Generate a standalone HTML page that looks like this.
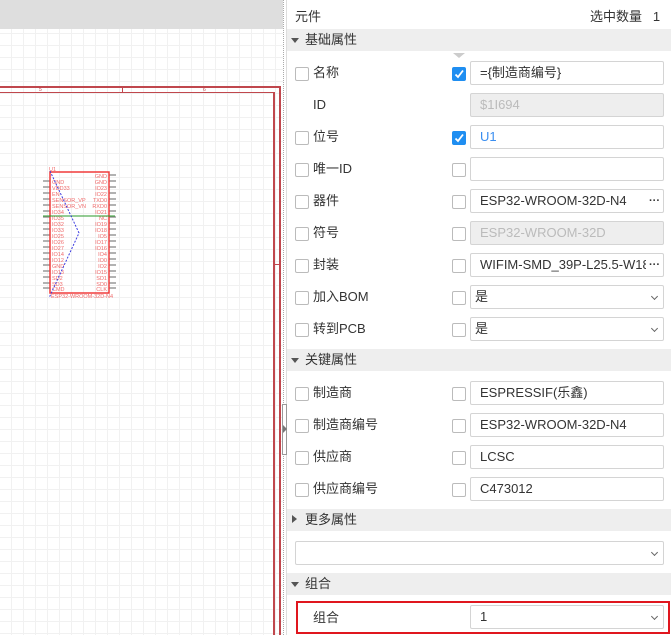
<!DOCTYPE html>
<html><head><meta charset="utf-8"><style>
*{margin:0;padding:0;box-sizing:border-box}
body{width:671px;height:635px;overflow:hidden;background:#fff;font-family:"Liberation Sans","Noto Sans CJK SC",sans-serif;font-size:13px;color:#333;position:relative}
.abs{position:absolute}
#canvas{left:0;top:0;width:283px;height:635px;background:#fff;background-image:linear-gradient(#f1f1f1 1px,transparent 1px),linear-gradient(90deg,#f1f1f1 1px,transparent 1px);background-size:12px 12px;background-position:0 9px,11px 0;overflow:hidden}
.sec{left:287px;width:384px;height:22px;background:#eee;font-size:13px;line-height:22px;padding-left:18px}
.tri{position:absolute;left:4px;top:9px;width:0;height:0;border-left:4px solid transparent;border-right:4px solid transparent;border-top:5px solid #555}
.trir{position:absolute;left:5px;top:6px;width:0;height:0;border-top:4px solid transparent;border-bottom:4px solid transparent;border-left:5px solid #555}
.cb{position:absolute;width:14px;height:14px;border:1px solid #bbb;background:#fff;border-radius:2px}
.cb.on{background:#1f8ef1;border-color:#1f8ef1}
.lbl{position:absolute;left:313px;font-size:13px;line-height:16px}
.inp{position:absolute;left:470px;width:194px;height:24px;border:1px solid #d4d4d4;border-radius:2px;background:#fff;font-size:13px;line-height:22px;padding-left:9px;white-space:nowrap;overflow:hidden}
.inp.dis{background:#eee;color:#bbb}
.dots{position:absolute;right:3px;top:0;background:#fff;font-weight:bold;letter-spacing:0;font-size:11px}
.chev{position:absolute;right:6px;top:8px;width:5px;height:5px;border-right:1px solid #666;border-bottom:1px solid #666;transform:rotate(45deg)}
</style></head><body>
<div id="canvas" class="abs">
<div class="abs" style="left:0;top:0;width:283px;height:29px;background:#dedede"></div>
<div class="abs" style="left:0;top:86px;width:280px;height:2px;background:#c0474d"></div>
<div class="abs" style="left:0;top:92px;width:274px;height:1px;background:#c0474d"></div>
<div class="abs" style="left:279px;top:86px;width:2px;height:560px;background:#c0474d"></div>
<div class="abs" style="left:273px;top:92px;width:2px;height:560px;background:#c0474d"></div>
<div class="abs" style="left:122px;top:86px;width:1px;height:7px;background:#c0474d"></div>
<div class="abs" style="left:274px;top:264px;width:7px;height:1px;background:#c0474d"></div>
<div class="abs" style="left:39px;top:87px;font-size:5px;color:#c0474d">5</div>
<div class="abs" style="left:203px;top:87px;font-size:5px;color:#c0474d">6</div>
<svg class="abs" style="left:0;top:0" width="283" height="635">
<g stroke="#999" stroke-width="1.5">
<line x1="43" y1="181" x2="50" y2="181"/><line x1="43" y1="187" x2="50" y2="187"/><line x1="43" y1="193" x2="50" y2="193"/><line x1="43" y1="199" x2="50" y2="199"/><line x1="43" y1="205" x2="50" y2="205"/><line x1="43" y1="211" x2="50" y2="211"/><line x1="43" y1="217" x2="50" y2="217"/><line x1="43" y1="223" x2="50" y2="223"/><line x1="43" y1="229" x2="50" y2="229"/><line x1="43" y1="235" x2="50" y2="235"/><line x1="43" y1="241" x2="50" y2="241"/><line x1="43" y1="247" x2="50" y2="247"/><line x1="43" y1="253" x2="50" y2="253"/><line x1="43" y1="259" x2="50" y2="259"/><line x1="43" y1="265" x2="50" y2="265"/><line x1="43" y1="271" x2="50" y2="271"/><line x1="43" y1="277" x2="50" y2="277"/><line x1="43" y1="283" x2="50" y2="283"/><line x1="43" y1="288" x2="50" y2="288"/>
<line x1="109" y1="175" x2="116" y2="175"/><line x1="109" y1="181" x2="116" y2="181"/><line x1="109" y1="187" x2="116" y2="187"/><line x1="109" y1="193" x2="116" y2="193"/><line x1="109" y1="199" x2="116" y2="199"/><line x1="109" y1="205" x2="116" y2="205"/><line x1="109" y1="211" x2="116" y2="211"/><line x1="109" y1="217" x2="116" y2="217"/><line x1="109" y1="223" x2="116" y2="223"/><line x1="109" y1="229" x2="116" y2="229"/><line x1="109" y1="235" x2="116" y2="235"/><line x1="109" y1="241" x2="116" y2="241"/><line x1="109" y1="247" x2="116" y2="247"/><line x1="109" y1="253" x2="116" y2="253"/><line x1="109" y1="259" x2="116" y2="259"/><line x1="109" y1="265" x2="116" y2="265"/><line x1="109" y1="271" x2="116" y2="271"/><line x1="109" y1="277" x2="116" y2="277"/><line x1="109" y1="283" x2="116" y2="283"/><line x1="109" y1="288" x2="116" y2="288"/>
</g>
<rect x="50" y="172" width="59" height="121" fill="none" stroke="#f03a3a" stroke-width="1.5"/>
<g font-size="5.5" fill="#f06a6a" font-family="Liberation Sans">
<text x="52" y="184">GND</text><text x="52" y="190">VDD33</text><text x="52" y="196">EN</text><text x="52" y="202">SENSOR_VP</text><text x="52" y="208">SENSOR_VN</text><text x="52" y="214">IO34</text><text x="52" y="220">IO35</text><text x="52" y="226">IO32</text><text x="52" y="232">IO33</text><text x="52" y="238">IO25</text><text x="52" y="244">IO26</text><text x="52" y="250">IO27</text><text x="52" y="256">IO14</text><text x="52" y="262">IO12</text><text x="52" y="268">GND</text><text x="52" y="274">IO13</text><text x="52" y="280">SD2</text><text x="52" y="286">SD3</text><text x="52" y="291">CMD</text>
<g text-anchor="end"><text x="107" y="178">GND</text><text x="107" y="184">GND</text><text x="107" y="190">IO23</text><text x="107" y="196">IO22</text><text x="107" y="202">TXD0</text><text x="107" y="208">RXD0</text><text x="107" y="214">IO21</text><text x="107" y="220">NC</text><text x="107" y="226">IO19</text><text x="107" y="232">IO18</text><text x="107" y="238">IO5</text><text x="107" y="244">IO17</text><text x="107" y="250">IO16</text><text x="107" y="256">IO4</text><text x="107" y="262">IO0</text><text x="107" y="268">IO2</text><text x="107" y="274">IO15</text><text x="107" y="280">SD1</text><text x="107" y="286">SD0</text><text x="107" y="291">CLK</text></g>
<text x="49" y="171">U1</text><text x="51" y="298">ESP32-WROOM-32D-N4</text>
</g>
<line x1="43" y1="216" x2="115" y2="216" stroke="#2a9a2a" stroke-width="1"/>
<polyline points="50,171 79,233 49,298" fill="none" stroke="#3a3ae0" stroke-width="1" stroke-dasharray="2,1.5"/>
</svg>
</div>
<div class="abs" style="left:283px;top:0;width:1px;height:635px;border-left:1px dotted #aaa"></div>
<div class="abs" style="left:286px;top:0;width:1px;height:635px;background:#ddd"></div>
<div class="abs" style="left:282px;top:404px;width:5px;height:51px;border:1px solid #999;background:#fff"></div>
<div class="abs" style="left:283px;top:425px;width:0;height:0;border-top:4px solid transparent;border-bottom:4px solid transparent;border-left:4px solid #777"></div>

<div class="abs" style="left:295px;top:6px;font-size:13px">元件</div>
<div class="abs" style="left:590px;top:6px;font-size:13px">选中数量&nbsp;&nbsp;&nbsp;1</div>
<div class="abs sec" style="top:29px"><span class="tri"></span>基础属性</div>
<div class="abs" style="left:453px;top:53px;width:0;height:0;border-left:6px solid transparent;border-right:6px solid transparent;border-top:5px solid #ccc"></div>

<div class="cb" style="left:295px;top:67px"></div><div class="lbl" style="top:65px">名称</div><div class="cb on" style="left:452px;top:67px"><svg width="12" height="12" style="position:absolute;left:0;top:0"><path d="M2.5 6.5 L5 9 L10 2.5" stroke="#fff" stroke-width="1.8" fill="none"/></svg></div><div class="inp" style="top:61px">={制造商编号}</div>
<div class="lbl" style="top:97px">ID</div><div class="inp dis" style="top:93px">$1I694</div>
<div class="cb" style="left:295px;top:131px"></div><div class="lbl" style="top:129px">位号</div><div class="cb on" style="left:452px;top:131px"><svg width="12" height="12" style="position:absolute;left:0;top:0"><path d="M2.5 6.5 L5 9 L10 2.5" stroke="#fff" stroke-width="1.8" fill="none"/></svg></div><div class="inp" style="top:125px;color:#3a8ef0">U1</div>
<div class="cb" style="left:295px;top:163px"></div><div class="lbl" style="top:161px">唯一ID</div><div class="cb" style="left:452px;top:163px"></div><div class="inp" style="top:157px"></div>
<div class="cb" style="left:295px;top:195px"></div><div class="lbl" style="top:193px">器件</div><div class="cb" style="left:452px;top:195px"></div><div class="inp" style="top:189px">ESP32-WROOM-32D-N4<span class="dots">···</span></div>
<div class="cb" style="left:295px;top:227px"></div><div class="lbl" style="top:225px">符号</div><div class="cb" style="left:452px;top:227px"></div><div class="inp dis" style="top:221px">ESP32-WROOM-32D</div>
<div class="cb" style="left:295px;top:259px"></div><div class="lbl" style="top:257px">封装</div><div class="cb" style="left:452px;top:259px"></div><div class="inp" style="top:253px">WIFIM-SMD_39P-L25.5-W18<span class="dots">&nbsp;···</span></div>
<div class="cb" style="left:295px;top:291px"></div><div class="lbl" style="top:289px">加入BOM</div><div class="cb" style="left:452px;top:291px"></div><div class="inp" style="top:285px;padding-left:4px">是<span class="chev"></span></div>
<div class="cb" style="left:295px;top:323px"></div><div class="lbl" style="top:321px">转到PCB</div><div class="cb" style="left:452px;top:323px"></div><div class="inp" style="top:317px;padding-left:4px">是<span class="chev"></span></div>

<div class="abs sec" style="top:349px"><span class="tri"></span>关键属性</div>
<div class="cb" style="left:295px;top:387px"></div><div class="lbl" style="top:385px">制造商</div><div class="cb" style="left:452px;top:387px"></div><div class="inp" style="top:381px">ESPRESSIF(乐鑫)</div>
<div class="cb" style="left:295px;top:419px"></div><div class="lbl" style="top:417px">制造商编号</div><div class="cb" style="left:452px;top:419px"></div><div class="inp" style="top:413px">ESP32-WROOM-32D-N4</div>
<div class="cb" style="left:295px;top:451px"></div><div class="lbl" style="top:449px">供应商</div><div class="cb" style="left:452px;top:451px"></div><div class="inp" style="top:445px">LCSC</div>
<div class="cb" style="left:295px;top:483px"></div><div class="lbl" style="top:481px">供应商编号</div><div class="cb" style="left:452px;top:483px"></div><div class="inp" style="top:477px">C473012</div>

<div class="abs sec" style="top:509px"><span class="trir"></span>更多属性</div>
<div class="inp" style="left:295px;width:369px;top:541px;height:24px"><span class="chev"></span></div>
<div class="abs sec" style="top:573px"><span class="tri"></span>组合</div>
<div class="abs" style="left:296px;top:601px;width:374px;height:33px;border:2px solid #e0161e"></div>
<div class="lbl" style="left:313px;top:610px">组合</div>
<div class="inp" style="top:605px">1<span class="chev"></span></div>
</body></html>
